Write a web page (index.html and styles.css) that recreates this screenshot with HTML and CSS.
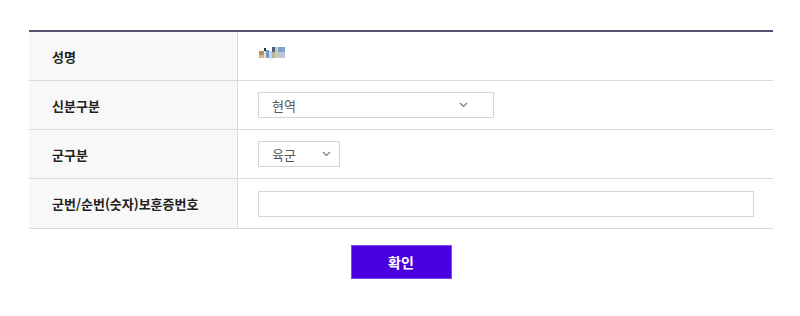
FILE: index.html
```html
<!DOCTYPE html>
<html lang="ko">
<head>
<meta charset="utf-8">
<link rel="stylesheet" href="styles.css">
</head>
<body>
<div class="wrap">
  <div class="form-table">
    <div class="row">
      <div class="th">성명</div>
      <div class="td">
        <svg class="name-img" width="30" height="14" viewBox="0 0 30 14" shape-rendering="crispEdges">
          <rect x="0" y="4" width="5" height="4" fill="#b98e63"/>
          <rect x="0" y="8" width="5" height="3" fill="#d8b38c"/>
          <rect x="5" y="1" width="2" height="3" fill="#333"/>
          <rect x="5" y="4" width="2" height="7" fill="#eadfd0"/>
          <rect x="7" y="3" width="3" height="8" fill="#6a9ad8"/>
          <rect x="10" y="4" width="3" height="7" fill="#c8d5e4"/>
          <rect x="13" y="0" width="3" height="5" fill="#4e5e78"/>
          <rect x="13" y="5" width="3" height="6" fill="#bfb39a"/>
          <rect x="16" y="0" width="3" height="11" fill="#c7cfb7"/>
          <rect x="19" y="0" width="7" height="5" fill="#7da4d2"/>
          <rect x="19" y="5" width="7" height="6" fill="#bfc9d6"/>
          <rect x="10" y="11" width="4" height="2" fill="#e0f4f4"/>
        </svg>
      </div>
    </div>
    <div class="row">
      <div class="th">신분구분</div>
      <div class="td">
        <div class="select select-wide"><span>현역</span>
          <svg class="chev" width="9" height="6" viewBox="0 0 9 6"><path d="M1 1 L4.5 4.5 L8 1" fill="none" stroke="#777" stroke-width="1.1"/></svg>
        </div>
      </div>
    </div>
    <div class="row">
      <div class="th">군구분</div>
      <div class="td">
        <div class="select select-small"><span>육군</span>
          <svg class="chev" width="9" height="6" viewBox="0 0 9 6"><path d="M1 1 L4.5 4.5 L8 1" fill="none" stroke="#777" stroke-width="1.1"/></svg>
        </div>
      </div>
    </div>
    <div class="row">
      <div class="th">군번/순번(숫자)보훈증번호</div>
      <div class="td">
        <input class="text-input" type="text">
      </div>
    </div>
  </div>
  <div class="btn-area">
    <button class="btn-confirm" type="button">확인</button>
  </div>
</div>
</body>
</html>
```

FILE: styles.css
```css
html, body {
  margin: 0;
  padding: 0;
  background: #fff;
}
body {
  font-family: "Noto Sans CJK KR", "Noto Sans", sans-serif;
  color: #222;
}
.wrap {
  padding: 30px 27px 0 29px;
}
.form-table {
  border-top: 2px solid #50536e;
}
.row {
  display: flex;
  height: 48px;
  border-bottom: 1px solid #dadada;
}
.row:last-child {
  height: 49px;
}
.th {
  width: 185px;
  padding-left: 23px;
  background: #f8f8f8;
  border-right: 1px solid #dadada;
  display: flex;
  align-items: center;
  font-size: 13px;
  font-weight: 700;
  color: #222;
}
.td {
  flex: 1;
  padding-left: 20px;
  display: flex;
  align-items: center;
}
.name-img {
  display: block;
  margin: -4px 0 0 1px;
}
.select {
  box-sizing: border-box;
  height: 26px;
  border: 1px solid #d4d4d4;
  background: #fff;
  display: flex;
  align-items: center;
  justify-content: space-between;
  padding: 0 12px 0 13px;
  font-size: 13px;
  color: #555;
}
.select-wide { width: 236px; padding-right: 25px; }
.select-small { width: 82px; padding-right: 8px; }
.chev { display: block; }
.text-input {
  box-sizing: border-box;
  width: 496px;
  height: 26px;
  border: 1px solid #d4d4d4;
  margin: 0;
  padding: 0 10px;
  outline: none;
}
.btn-area {
  display: flex;
  justify-content: center;
  padding-top: 16px;
}
.btn-confirm {
  width: 101px;
  height: 34px;
  border: 1px solid #7a4cf0;
  background: #4a00e0;
  color: #fff;
  font-family: "Noto Sans CJK KR", "Noto Sans", sans-serif;
  font-size: 14px;
  font-weight: 700;
  margin: 0;
  padding: 0;
}
```
